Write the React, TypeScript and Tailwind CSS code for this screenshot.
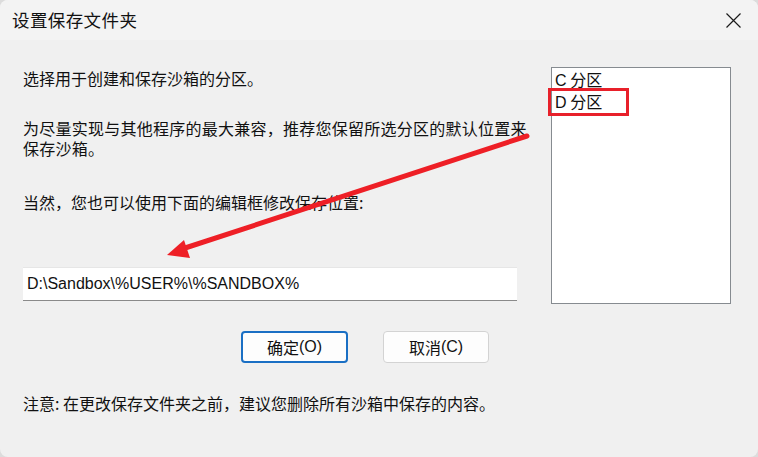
import React from 'react';

const cjk = { fontFamily: '"Noto Sans CJK SC", "Liberation Sans", sans-serif' };
const latin = { fontFamily: '"Liberation Sans", "Noto Sans CJK SC", sans-serif' };

const App: React.FC = () => {
  return (
    <div className="w-[758px] h-[457px] bg-[#dcdcdc] overflow-hidden">
      <div
        className="relative w-[758px] h-[457px] bg-[#f0f0f0] rounded-[8px] overflow-hidden text-[#111] flex flex-col"
        style={cjk}
      >
        {/* Title bar */}
        <div className="h-[40px] shrink-0 bg-[#f3f3f3] flex items-center justify-between pl-[12px] pr-[17px]">
          <span className="text-[17.5px] leading-none tracking-[0.4px]">设置保存文件夹</span>
          <svg width="15" height="15" viewBox="0 0 15 15" className="mt-[1px]">
            <path d="M0.5 0.5 L14.5 14.5 M14.5 0.5 L0.5 14.5" stroke="#1b1b1b" strokeWidth="1.2" />
          </svg>
        </div>

        {/* Body */}
        <div className="flex flex-1">
          <div className="w-[528px] pl-[23px] flex flex-col text-[16px] leading-[20px]">
            <p className="mt-[28px]">选择用于创建和保存沙箱的分区。</p>
            <p className="mt-[30px] tracking-[0.25px]">
              为尽量实现与其他程序的最大兼容，推荐您保留所选分区的默认位置来
              <br />
              保存沙箱。
            </p>
            <p className="mt-[34px]">当然，您也可以使用下面的编辑框修改保存位置:</p>

            <div className="mt-[55px] w-[494px] h-[34px] bg-white border-t border-[#e6e6e6] border-b border-b-[#8a8a8a] flex items-center pl-[4px]">
              <span className="text-[16px] text-[#111]" style={latin}>
                D:\Sandbox\%USER%\%SANDBOX%
              </span>
            </div>

            <div className="mt-[30px] flex gap-[35px] pl-[218px]">
              <button className="w-[107px] h-[32px] bg-[#fdfdfd] border-2 border-[#1a6fc4] rounded-[4px] text-[16px] flex items-center justify-center">
                确定<span style={latin}>(O)</span>
              </button>
              <button className="w-[106px] h-[32px] bg-[#fdfdfd] border border-[#d3d3d3] rounded-[4px] text-[16px] flex items-center justify-center">
                取消<span style={latin}>(C)</span>
              </button>
            </div>

            <p className="mt-[30px]">注意: 在更改保存文件夹之前，建议您删除所有沙箱中保存的内容。</p>
          </div>

          <div className="ml-[23px] mt-[27px] w-[180px] h-[237px] bg-white border border-[#868b90] pl-[3px] pt-[1px] text-[16px] leading-[20px]">
            <div>
              <span style={latin}>C</span> 分区
            </div>
            <div>
              <span style={latin}>D</span> 分区
            </div>
          </div>
        </div>

        {/* Annotation: red highlight box */}
        <div className="absolute left-[548px] top-[88px] w-[81px] h-[28px] border-[3px] border-[#e8202a]" />

        {/* Annotation: red arrow */}
        <svg className="absolute left-0 top-0 pointer-events-none" width="758" height="457">
          <line x1="527" y1="136" x2="182" y2="249" stroke="#ee1f26" strokeWidth="5" strokeLinecap="round" />
          <polygon points="167,255 184,240 190,258" fill="#ee1f26" />
        </svg>
      </div>
    </div>
  );
};

export default App;
